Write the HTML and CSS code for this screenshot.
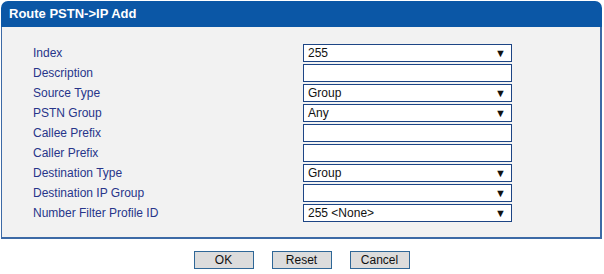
FILE: index.html
```
<!DOCTYPE html>
<html lang="en">
<head>
    <meta charset="UTF-8">
    <title>Route PSTN-&gt;IP Add</title>
    <link rel="stylesheet" href="styles.css">
</head>
<body>
    <div class="panel">
        <div class="panel-title">Route PSTN-&gt;IP Add</div>
        <div class="panel-body">
            <div class="form">
                <label>Index</label>
                <div class="field select"><span>255</span><i>&#9660;</i></div>
                <label>Description</label>
                <div class="field"></div>
                <label>Source Type</label>
                <div class="field select"><span>Group</span><i>&#9660;</i></div>
                <label>PSTN Group</label>
                <div class="field select"><span>Any</span><i>&#9660;</i></div>
                <label>Callee Prefix</label>
                <div class="field"></div>
                <label>Caller Prefix</label>
                <div class="field"></div>
                <label>Destination Type</label>
                <div class="field select"><span>Group</span><i>&#9660;</i></div>
                <label>Destination IP Group</label>
                <div class="field select"><span></span><i>&#9660;</i></div>
                <label>Number Filter Profile ID</label>
                <div class="field select"><span>255 &lt;None&gt;</span><i>&#9660;</i></div>
            </div>
        </div>
    </div>
    <div class="buttons">
        <button>OK</button>
        <button>Reset</button>
        <button>Cancel</button>
    </div>
</body>
</html>
```
FILE: styles.css
```
* {
    margin: 0;
    padding: 0;
    box-sizing: border-box;
}
body {
    background: #fff;
    font-family: "Liberation Sans", Arial, sans-serif;
    font-size: 12px;
    padding: 1px 2px 0 1px;
}
.panel-title {
    background: #0b57a6;
    color: #fff;
    font-weight: bold;
    font-size: 13px;
    height: 26px;
    line-height: 26px;
    padding-left: 8px;
    border-radius: 7px 7px 0 0;
}
.panel-body {
    background: #f2f2f2;
    border: 1px solid #3d6aa6;
    border-top: none;
    border-width: 0 2px 2px 1px;
    padding: 17px 0 15px 31px;
}
.form {
    display: grid;
    grid-template-columns: 270px 209px;
    row-gap: 2px;
    align-items: center;
}
.form label {
    color: #27358a;
}
.field {
    height: 18px;
    background: #fff;
    border: 1px solid #1d4585;
    display: flex;
    align-items: center;
    justify-content: space-between;
    padding: 0 5px 0 4px;
    color: #111;
    font-size: 12px;
}
.field i {
    font-style: normal;
    font-size: 11px;
}
.buttons {
    display: flex;
    justify-content: center;
    gap: 18px;
    margin-top: 12px;
}
.buttons button {
    width: 60px;
    height: 18px;
    background: #dcdcdc;
    border: 1px solid #2f6797;
    font-family: "Liberation Sans", Arial, sans-serif;
    font-size: 12px;
    color: #111;
}
```
